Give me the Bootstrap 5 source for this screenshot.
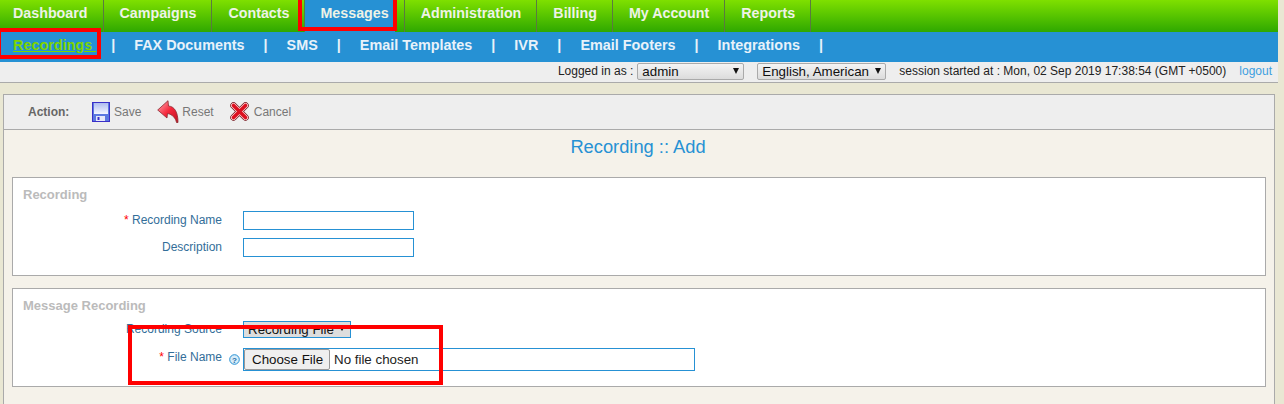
<!DOCTYPE html>
<html lang="en">
<head>
<meta charset="utf-8">
<title>Recording :: Add</title>
<link href="https://cdn.jsdelivr.net/npm/bootstrap@5.3.0/dist/css/bootstrap.min.css" rel="stylesheet">
<style>
html,body{height:100%;overflow:hidden}
body{background:#e9e7d3;font-family:"Liberation Sans",Arial,sans-serif;font-size:12px;color:#222;position:relative}
.shell{width:1278px}
.topnav{height:32px;background:linear-gradient(#7fe000,#2fa800)}
.topnav a{display:block;height:32px;line-height:26px;padding:0 15px 0 16px;border-right:1px solid #5a7a40;color:#eef3e6;font-weight:700;font-size:14.28px;text-decoration:none}
.topnav a:first-child{padding-left:13px}
.topnav a.on{background:linear-gradient(#2691d4,#2691d4) no-repeat;background-size:90px 100%;padding-left:15px}
.subnav{height:30px;background:#2691d4;padding-left:13px;font-weight:700;font-size:14.4px;color:#e8f2fa;line-height:27px;gap:0 19px}
.subnav a{color:#e8f2fa;text-decoration:none}
.subnav a.on{color:#7fd400;text-decoration:underline;margin-right:-4px}
.statusbar{height:21px;background:#eee;border-bottom:1px solid #aaa;padding-right:6px;line-height:18px;color:#222}
.pick{position:relative;display:inline-block;height:17px;margin-top:1px}
.pick select{appearance:none;-webkit-appearance:none;display:block;height:17px;padding:0 0 0 4px;border:1px solid #aaa;border-radius:2px;background:linear-gradient(#f4f4f4,#dcdcdc);font:13.33px/15px "Liberation Sans",Arial,sans-serif;color:#111}
.pick::after{content:"";position:absolute;right:5px;top:5px;border:3px solid transparent;border-top:6px solid #111;border-bottom:0}
.logoutlink{color:#3d9fe0;text-decoration:none}
.panelbox{margin:11px 3px 0;background:#f5f2ea;border-left:1px solid #aaa;border-right:1px solid #aaa;border-top:1px solid #aaa;height:320px}
.toolstrip{height:35px;background:#eee;border-bottom:1px solid #aaa;padding:0 0 1px 24px;color:#777}
.toolstrip b{color:#666;width:64px}
.toolitem{color:#777;text-decoration:none}
.formtitle{font-size:18.3px;line-height:22px;color:#2691d4;margin:6px 0 0;padding-right:2px;font-weight:400;text-align:center;height:41px}
.fieldblock{margin:0 8px 12px 8px;background:#fff;border:1px solid #aaa;height:99px;padding:8px 10px 0}
.fieldblock h2{font-size:13px;line-height:17px;font-weight:700;color:#bbb;margin:0 0 8px}
.fieldblock h2.tight{margin-bottom:7px}
.fieldrow{display:flex;margin-bottom:8px}
.fieldrow label{width:199px;text-align:right;color:#336e99;line-height:17px;margin:0}
.fieldrow label.nudge{padding-top:1px}
.fieldrow label i{font-style:normal;color:#f00}
.tip{width:21px;display:flex;align-items:flex-start;justify-content:center;padding:6px 0 0 3px}
.txtbox{width:171px;height:19px;border:1px solid #2691d4;background:#fff;padding:0 3px;outline:0;display:block}
.srcwrap{position:relative;display:block;height:17px;width:108px}
.srcwrap::after{content:"";position:absolute;right:7px;top:7px;border:2px solid transparent;border-top:3px solid #111;border-bottom:0}
.srcpick{appearance:none;-webkit-appearance:none;width:108px;height:17px;border:1px solid #2691d4;background:#ddd;font:13.33px/15px "Liberation Sans",Arial,sans-serif;color:#111;padding:0 0 0 4px;border-radius:0;display:block}
.rowfile{margin-top:10px}
.filebox{width:452px;height:23px;border:1px solid #2691d4;background:#fff;font:13.33px "Liberation Sans",Arial,sans-serif;color:#222;display:block;padding:0}
.filebox::file-selector-button{height:21px;font:13.33px "Liberation Sans",Arial,sans-serif;background:#efefef;border:1px solid #999;border-radius:2px;padding:0 7px;margin:0 4px 0 0;color:#111;width:86px}
.redmark{position:absolute;border:4px solid #f00;pointer-events:none}
.mk1{left:298px;top:-4px;width:99px;height:35px}
.mk2{left:-3px;top:28px;width:104px;height:31px}
.mk3{left:128px;top:325px;width:315px;height:60px}
</style>
</head>
<body>
<div class="shell">
  <nav class="topnav d-flex">
    <a href="#">Dashboard</a>
    <a href="#">Campaigns</a>
    <a href="#">Contacts</a>
    <a href="#" class="on">Messages</a>
    <a href="#">Administration</a>
    <a href="#">Billing</a>
    <a href="#">My Account</a>
    <a href="#">Reports</a>
  </nav>
  <div class="subnav d-flex">
    <a href="#" class="on">Recordings&nbsp;</a><span>|</span>
    <a href="#">FAX Documents</a><span>|</span>
    <a href="#">SMS</a><span>|</span>
    <a href="#">Email Templates</a><span>|</span>
    <a href="#">IVR</a><span>|</span>
    <a href="#">Email Footers</a><span>|</span>
    <a href="#">Integrations</a><span>|</span>
  </div>
  <div class="statusbar d-flex justify-content-end">
    <span>Logged in as :</span>
    <span class="pick ms-1" style="width:107px"><select class="w-100"><option>admin</option></select></span>
    <span class="pick" style="width:129px;margin-left:13px"><select class="w-100"><option>English, American</option></select></span>
    <span style="margin-left:13px">session started at : Mon, 02 Sep 2019 17:38:54 (GMT +0500)</span>
    <a href="#" class="logoutlink" style="margin-left:13px">logout</a>
  </div>
  <div class="panelbox">
    <div class="toolstrip d-flex align-items-center">
      <b>Action:</b>
      <a href="#" class="toolitem d-flex align-items-center gap-1">
        <svg width="18" height="20" viewBox="0 0 18 20"><defs><linearGradient id="sv" x1="0" y1="0" x2="0" y2="1"><stop offset="0" stop-color="#aebcf0"/><stop offset="1" stop-color="#f4f6ff"/></linearGradient></defs><rect x=".5" y=".5" width="17" height="19" fill="#5b78e0" stroke="#3a2fc8"/><rect x="2" y="1" width="14" height="11" fill="url(#sv)"/><rect x="4" y="14" width="9" height="5" fill="#e6e8fa"/><rect x="5.500" y="15" width="2" height="3" fill="#3a2fc8"/></svg>
        <span>Save</span>
      </a>
      <a href="#" class="toolitem d-flex align-items-center" style="margin-left:16px;gap:3px">
        <svg width="22" height="23" viewBox="0 0 22 23"><defs><linearGradient id="rs" x1="0" y1="0" x2="1" y2="1"><stop offset="0" stop-color="#ffb0b8"/><stop offset=".5" stop-color="#f5283c"/><stop offset="1" stop-color="#c01020"/></linearGradient></defs><path d="M.7 10 11 .7l.5 5.300c6 .5 9.500 6 9.500 16.500h-1.500C18.500 18 15.500 14.500 10.500 13.500l-.5 4.500Z" fill="url(#rs)" stroke="#8a2a30" stroke-width=".8" stroke-linejoin="round"/></svg>
        <span>Reset</span>
      </a>
      <a href="#" class="toolitem d-flex align-items-center" style="margin-left:16px;gap:5px">
        <svg width="19" height="19" viewBox="0 0 19 19"><g fill="none" stroke-linecap="round"><path d="M3.500 3.500 15.500 15.500M15.500 3.500 3.500 15.500" stroke="#701018" stroke-width="6.500"/><path d="M3.500 3.500 15.500 15.500M15.500 3.500 3.500 15.500" stroke="#ffd8d8" stroke-width="5.200"/><path d="M3.500 3.500 15.500 15.500M15.500 3.500 3.500 15.500" stroke="#dc1020" stroke-width="3.600"/></g></svg>
        <span>Cancel</span>
      </a>
    </div>
    <h1 class="formtitle">Recording :: Add</h1>
    <section class="fieldblock">
      <h2>Recording</h2>
      <div class="fieldrow"><label class="nudge"><i>*</i> Recording Name</label><span class="tip"></span><input class="txtbox" type="text"></div>
      <div class="fieldrow"><label class="nudge">Description</label><span class="tip"></span><input class="txtbox" type="text"></div>
    </section>
    <section class="fieldblock">
      <h2 class="tight">Message Recording</h2>
      <div class="fieldrow mb-0"><label>Recording Source</label><span class="tip"></span><span class="srcwrap"><select class="srcpick"><option>Recording File</option></select></span></div>
      <div class="fieldrow rowfile"><label class="nudge"><i>*</i> File Name</label><span class="tip"><svg width="11" height="11" viewBox="0 0 11 11"><circle cx="5.500" cy="5.500" r="4.800" fill="#d8ecf8" stroke="#2691d4"/><text x="5.500" y="8.500" font-size="8" font-weight="700" text-anchor="middle" fill="#1a6fa8" font-family="Liberation Sans">?</text></svg></span><input class="filebox" type="file"></div>
    </section>
  </div>
</div>
<div class="redmark mk1"></div>
<div class="redmark mk2"></div>
<div class="redmark mk3"></div>
<script src="https://cdn.jsdelivr.net/npm/bootstrap@5.3.0/dist/js/bootstrap.bundle.min.js"></script>
</body>
</html>
